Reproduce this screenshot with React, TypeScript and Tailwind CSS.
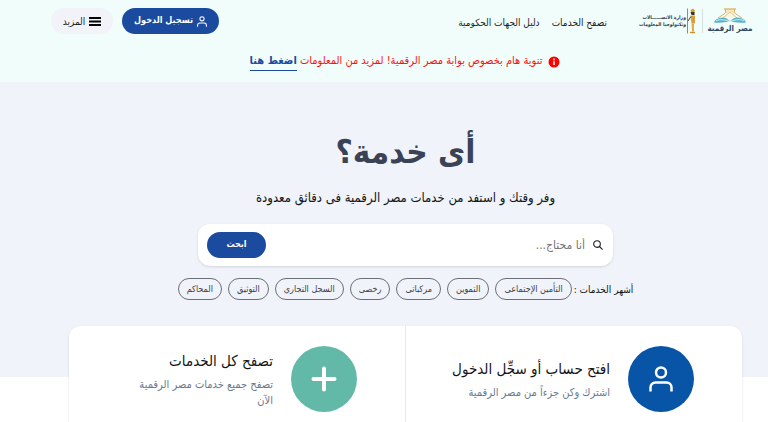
import { clsx } from 'clsx';
import type { ReactNode } from 'react';

const navLinks = [
  { label: 'تصفح الخدمات', href: '#services' },
  { label: 'دليل الجهات الحكومية', href: '#directory' },
];

const popularServices = [
  'التأمين الإجتماعى',
  'التموين',
  'مركباتى',
  'رخصى',
  'السجل التجاري',
  'التوثيق',
  'المحاكم',
];

function UserIcon({ className }: { className?: string }) {
  return (
    <svg viewBox="0 0 24 26" fill="none" stroke="currentColor" strokeWidth="2.5" className={className} aria-hidden="true">
      <circle cx="12" cy="6.5" r="5" />
      <path d="M1.500 25.500v-4a5 5 0 0 1 5-5h11a5 5 0 0 1 5 5v4" />
    </svg>
  );
}

function DigitalEgyptLogo() {
  return (
    <a href="#home" className="flex w-[42px] flex-col items-center text-[#2b4763]">
      <svg viewBox="0 0 32 15" className="h-[15px] w-8" aria-hidden="true">
        <path d="M10.500 1h11L20.500 5h-9z" fill="#f6e6c0" />
        <path d="M10 1h12" stroke="#d9b26a" strokeWidth="1.300" />
        <path d="M11.500 1.500v3.500L4 10M20.500 1.500v3.500L28 10" stroke="#d9b26a" strokeWidth="1" fill="none" />
        <path d="M16 3.500 8 9.500h16z" fill="#fbf4df" />
        <path d="M16 4 9 10M16 4l7 6" stroke="#e0bf7c" strokeWidth="0.900" fill="none" />
        <path d="M0 14.500c1-3 4-4.500 9-5 2 0 4 1 7 3.500-4 1.500-10 2-16 1.500z" fill="#58b1cb" />
        <path d="M32 14.500c-1-3-4-4.500-9-5-2 0-4 1-7 3.500 4 1.500 10 2 16 1.500z" fill="#58b1cb" />
        <path d="M2 12.800c4-1.800 8-1.300 14 .7 6-2 10-2.500 14-.7" stroke="#f0fdfb" strokeWidth="0.800" fill="none" />
      </svg>
      <span className="text-[8px] leading-3 font-bold whitespace-nowrap">مصر الرقمية</span>
    </a>
  );
}

function MinistryLogo() {
  return (
    <a href="#ministry" className="flex items-center text-[#33383b]">
      <svg viewBox="0 0 10 27" className="h-7 w-[10px]" aria-hidden="true">
        <path d="M1.500 1v25" stroke="#3c8b72" strokeWidth="0.800" />
        <path d="M4.500 2.500 7 1l2 2-1 3H5.500z" fill="#d8a03a" />
        <path d="M4.500 4.500h4v3h-3z" fill="#3a3328" />
        <path d="M4.500 8h4.500v8H5.500z" fill="#d8a03a" />
        <path d="M5 9 2 13.500" stroke="#4a3b22" strokeWidth="1" />
        <path d="M5.500 16H8v8H6z" fill="#e0ad48" />
        <path d="M4 25h5" stroke="#c98f30" strokeWidth="1.400" />
      </svg>
      <span className="flex flex-col text-[5px] leading-[7px] font-bold whitespace-nowrap">
        <span>وزارة الاتصــــــالات</span>
        <span>وتكنولوجيا المعلومات</span>
      </span>
    </a>
  );
}

function Header() {
  return (
    <header className="bg-[#f0fdfb] pb-3">
      <div className="flex h-[42px] items-center pr-[17px] pl-[51px]">
        <div className="flex items-center">
          <DigitalEgyptLogo />
          <span className="mx-[6px] h-6 w-px bg-[#d5e0e3]" />
          <MinistryLogo />
        </div>
        <nav className="mr-8 flex items-center gap-3 pt-[2px] text-[10px] text-[#1f2526]">
          {navLinks.map((link) => (
            <a key={link.href} href={link.href} className="whitespace-nowrap">
              {link.label}
            </a>
          ))}
        </nav>
        <div className="mr-auto flex items-center gap-[9px]">
          <button
            type="button"
            className="flex h-[26px] w-[97px] items-center justify-center gap-1 rounded-full bg-[#1b4b9e] text-[9px] font-bold whitespace-nowrap text-white"
          >
            <UserIcon className="h-[11px] w-[10px]" />
            تسجيل الدخول
          </button>
          <button
            type="button"
            className="flex h-[26px] w-[62px] items-center justify-center gap-1 rounded-full bg-[#f1f3f9] text-[10px] whitespace-nowrap text-[#1f2526]"
          >
            <svg viewBox="0 0 12 9" className="h-[9px] w-3" fill="black" aria-hidden="true">
              <path d="M0 0h12v2H0zM0 3.500h12v2H0zM0 7h12v2H0z" />
            </svg>
            المزيد
          </button>
        </div>
      </div>
      <div className="flex h-7 items-center justify-center gap-[6px] pt-3 pl-[42px] text-[11px] text-[#ff1010]">
        <svg viewBox="0 0 12 12" className="size-3" aria-hidden="true">
          <circle cx="6" cy="6" r="5.500" fill="#ff0000" />
          <circle cx="6" cy="3.500" r="0.900" fill="white" />
          <path d="M6 5.200v3.800" stroke="white" strokeWidth="1.500" fill="none" />
        </svg>
        <p className="whitespace-nowrap">
          تنوية هام بخصوص بوابة مصر الرقمية! لمزيد من المعلومات{' '}
          <a href="#notice" className="inline-block border-b border-[#1b4b9e] font-bold text-[#1b4b9e]">
            اضغط هنا
          </a>
        </p>
      </div>
    </header>
  );
}

function Search() {
  return (
    <form className="mx-auto mt-[14px] flex h-[42px] w-full max-w-[415px] items-center rounded-xl bg-white pr-[10px] pl-[9px] shadow-sm">
      <svg viewBox="0 0 12 12" className="size-[10px] text-[#222]" fill="none" stroke="currentColor" strokeWidth="1.300" aria-hidden="true">
        <circle cx="4.800" cy="4.800" r="4" />
        <path d="m7.800 7.800 3.700 3.700" />
      </svg>
      <input
        type="text"
        aria-label="أنا محتاج"
        placeholder="أنا محتاج..."
        className="mr-2 min-w-0 flex-1 text-[12px] outline-none placeholder:text-[#757575]"
      />
      <button type="submit" className="h-[26px] w-[59px] rounded-full bg-[#1b4b9e] text-[9px] font-bold text-white">
        ابحث
      </button>
    </form>
  );
}

function ActionCard({
  title,
  text,
  color,
  children,
}: {
  title: string;
  text: string;
  color: string;
  children: ReactNode;
}) {
  return (
    <a href="#start" className="flex min-w-0 flex-1 items-center gap-[18px] bg-white py-5 pr-12 pl-14">
      <span className={clsx('flex size-[66px] shrink-0 items-center justify-center rounded-full text-white', color)}>
        {children}
      </span>
      <span className="flex min-w-0 flex-col gap-1">
        <span className="text-[15px] leading-6 whitespace-nowrap text-[#151515]">{title}</span>
        <span className="text-[11px] leading-4 text-[#6b7a90]">{text}</span>
      </span>
    </a>
  );
}

export default function App() {
  return (
    <div dir="rtl" className="min-h-screen bg-white font-['DejaVu_Sans_Condensed','DejaVu_Sans',sans-serif]">
      <Header />
      <section className="bg-[#f0f3f9] pt-10 pr-[26px] pb-[77px] pl-[69px] text-center">
        <h1 className="text-[33px] leading-[60px] font-bold text-[#3a4356]">أى خدمة؟</h1>
        <p className="mt-1 text-[13px] leading-6 text-[#151515]">وفر وقتك و استفد من خدمات مصر الرقمية فى دقائق معدودة</p>
        <Search />
        <div className="mt-3 flex items-center justify-center gap-[6px] text-[9px] whitespace-nowrap">
          <span className="-ml-1 text-[10px] text-[#151515]">أشهر الخدمات :</span>
          {popularServices.map((service) => (
            <a key={service} href="#service" className="rounded-full border border-[#6b6f76] px-2 leading-5 text-[#3c4047]">
              {service}
            </a>
          ))}
        </div>
      </section>
      <main className="-mt-[51px] pr-[26px] pl-[69px]">
        <div className="flex gap-px overflow-hidden rounded-t-xl bg-[#e6ebf1] shadow-sm">
          <ActionCard title="افتح حساب أو سجِّل الدخول" text="اشترك وكن جزءاً من مصر الرقمية" color="bg-[#0854a6]">
            <UserIcon className="h-[26px] w-6" />
          </ActionCard>
          <ActionCard title="تصفح كل الخدمات" text="تصفح جميع خدمات مصر الرقمية الآن" color="bg-[#62b9a8]">
            <svg viewBox="0 0 26 26" className="size-[26px]" stroke="currentColor" strokeWidth="4" strokeLinecap="round" aria-hidden="true">
              <path d="M13 2.500v21M2.500 13h21" />
            </svg>
          </ActionCard>
        </div>
      </main>
    </div>
  );
}
